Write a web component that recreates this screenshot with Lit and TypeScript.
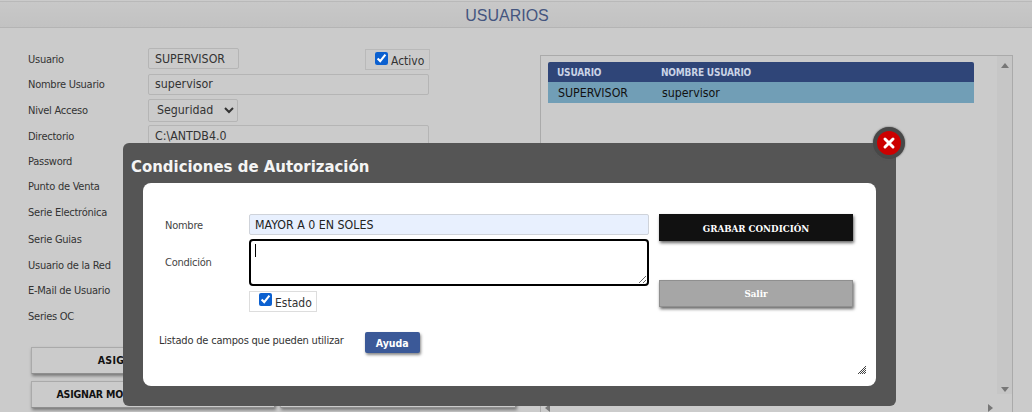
import { LitElement, html, css } from "lit";
import { customElement } from "lit/decorators.js";

const labels = ["Usuario","Nombre Usuario","Nivel Acceso","Directorio","Password","Punto de Venta","Serie Electrónica","Serie Guias","Usuario de la Red","E-Mail de Usuario","Series OC"];

@customElement("app-root")
export class AppRoot extends LitElement {
  static styles = css`
    :host { display: block; position: relative; width: 1032px; height: 412px; overflow: hidden; background: #cbcbcb; font-family: "DejaVu Sans Condensed", "DejaVu Sans", sans-serif; font-size: 11px; letter-spacing: -0.25px; color: #333; }
    * { box-sizing: border-box; }
    .title { margin-top: 1px; height: 27px; background: linear-gradient(#c8c8c8, #c2c2c2); border-top: 1px solid #b9b9b9; border-bottom: 1px solid #b4b4b4; text-align: center; font: 16px/27px "Liberation Sans", sans-serif; letter-spacing: 0; color: #44557f; padding-right: 18px; }
    .main { display: flex; padding-left: 28px; }
    .left { width: 512px; flex: none; padding-top: 18px; }
    .form { display: grid; grid-template-columns: 120px 1fr; grid-template-rows: 25px 26px 26px 25px 25px 25px 27px 27px 25px 26px 26px; align-items: center; }
    .lab { padding-top: 1px; }
    .field { display: flex; align-items: center; justify-content: space-between; width: 282px; }
    input[type=text], .sel { height: 21px; border: 1px solid #b5b5b5; background: #cbcbcb; border-radius: 2px; font-family: inherit; font-size: 12.3px; letter-spacing: 0; color: #333; padding: 0 6px; outline: none; }
    input.full { width: 281px; }
    input.short { width: 91px; }
    .sel { width: 90px; height: 23px; padding: 0 4px; }
    .chk { display: inline-flex; align-items: flex-start; border: 1px solid #b9b9b9; height: 21px; width: 65px; padding: 2px 0 0 9px; gap: 3px; margin-top: 2px; font-size: 12px; letter-spacing: 0; }
    .chk input { margin: 0; width: 13px; height: 13px; accent-color: #0b60d0; }
    .chk span { line-height: 15px; margin-top: 2px; }
    .btns { display: grid; grid-template-columns: 244px 236px; gap: 7px 5px; margin: 18px 0 0 3px; }
    .btn { height: 27px; padding-bottom: 2px; border: 1px solid #8e8e8e; border-top-color: #aaa; border-left-color: #aaa; background: #cbcbcb; box-shadow: 1px 2px 3px #777; font-weight: bold; color: #111; font-size: 10.5px; letter-spacing: 0; display: flex; align-items: center; justify-content: center; }
    .wide { letter-spacing: 0.25px; }
    .tight { letter-spacing: -0.2px; }
    .right { margin-top: 27px; width: 473px; height: 357px; flex: none; border-top: 1px solid #aaa; border-left: 1px solid #aaa; border-right: 1px solid #aaa; display: flex; flex-direction: column; }
    .list { flex: 1; display: flex; min-height: 0; }
    .content { flex: 1; padding: 6px 0 0 7px; }
    .table { width: 426px; }
    .thead, .trow { display: grid; grid-template-columns: 104px 1fr; align-items: center; padding-left: 9px; }
    .thead { height: 20px; background: #2f4578; color: #c9d3e6; font-weight: bold; font-size: 10px; letter-spacing: -0.2px; border-radius: 2px 2px 0 0; }
    .trow { height: 21px; background: #719eb6; color: #111; padding-left: 10px; font-size: 12.3px; letter-spacing: 0; }
    .vbar { width: 15px; background: #c6c6c6; display: flex; flex-direction: column; align-items: center; justify-content: space-between; padding: 7px 0 2px; }
    .hbar { height: 18px; display: flex; align-items: flex-end; justify-content: space-between; padding: 0 19px 0 4px; flex: none; }
    .up { border: 4.5px solid transparent; border-top: 0; border-bottom: 5px solid #777; }
    .down { border: 4.5px solid transparent; border-bottom: 0; border-top: 5px solid #777; }
    .lf { border: 4.5px solid transparent; border-left: 0; border-right: 5px solid #777; }
    .rt { border: 4.5px solid transparent; border-right: 0; border-left: 5px solid #777; }

    .modal { position: absolute; left: 123px; top: 143px; width: 773px; height: 263px; background: #555; border-radius: 6px; padding: 0 20px; display: flex; flex-direction: column; }
    .mhead { height: 40px; margin-left: -12px; font-size: 16.6px; letter-spacing: 0; font-weight: bold; color: #f4f4f4; line-height: 47px; }
    .mbody { position: relative; width: 733px; height: 203px; background: #fff; border-radius: 8px; padding: 31px 23px 0 22px; display: grid; grid-template-columns: 84px 400px 194px; grid-template-rows: 25px 52px 28px; }
    .mlab { color: #444; }
    .l1 { padding-top: 5px; } .l2 { padding-top: 17px; }
    input.nm { width: 400px; height: 21px; padding: 0 5px; background: #e8f0fe; border-color: #cfd3da; color: #222; }
    .ta { position: relative; height: 47px; width: 400px; }
    textarea { display: block; width: 400px; height: 47px; border: 2px solid #000; border-radius: 4px; background: #fff; outline: none; padding: 0; margin: 0; resize: both; }
    .caret { position: absolute; left: 6px; top: 5px; width: 1px; height: 13px; background: #000; }
    .side { grid-column: 3; grid-row: 1 / span 3; padding-left: 10px; display: flex; flex-direction: column; gap: 39px; }
    .mb { height: 27px; width: 194px; display: flex; align-items: center; justify-content: center; color: #fff; font-weight: bold; font-size: 9.7px; letter-spacing: 0; box-shadow: 1px 2px 3px #666; font-family: "DejaVu Serif Condensed", "DejaVu Sans", sans-serif; }
    .grab { background: #111; padding-top: 2px; }
    .salir { background: #a6a6a6; border: 1px solid #8f8f8f; }
    .est { grid-column: 2; grid-row: 3; align-self: start; margin-top: 0; width: 68px; border-color: #ddd; padding-top: 1px; }
    .est span { margin-top: 3px; }
    .foot { position: absolute; left: 16px; top: 149px; display: flex; align-items: flex-start; gap: 21px; color: #333; letter-spacing: -0.2px; }
    .foot span { line-height: 16px; margin-top: 1px; }
    .ayuda { width: 55px; height: 21px; border-radius: 2px; background: #3b5998; color: #fff; font-weight: bold; font-size: 10.5px; letter-spacing: 0; display: flex; align-items: center; justify-content: center; box-shadow: 1px 2px 3px #888; }
    .grip { position: absolute; right: 10px; bottom: 12px; width: 8px; height: 8px; }
    .close { position: absolute; left: 873px; top: 127px; width: 32px; height: 32px; border-radius: 50%; background: #c00; border: 4px solid #484848; box-shadow: 0 0 2px #555; display: flex; align-items: center; justify-content: center; }
  `;

  render() {
    return html`
      <div class="title">USUARIOS</div>
      <div class="main">
        <div class="left">
          <div class="form">
            ${labels.map((l, i) => html`<div class="lab">${l}</div><div>${this.field(i)}</div>`)}
          </div>
          <div class="btns">
            <div class="btn wide">ASIGNAR PERMISOS</div><div class="btn"></div>
            <div class="btn tight">ASIGNAR MONTOS DE AUTORIZACIÓN</div><div class="btn"></div>
          </div>
        </div>
        <div class="right">
          <div class="list">
            <div class="content">
              <div class="table">
                <div class="thead"><div>USUARIO</div><div>NOMBRE USUARIO</div></div>
                <div class="trow"><div>SUPERVISOR</div><div>supervisor</div></div>
              </div>
            </div>
            <div class="vbar"><div class="up"></div><div class="down"></div></div>
          </div>
          <div class="hbar"><div class="lf"></div><div class="rt"></div></div>
        </div>
      </div>
      <div class="modal">
        <div class="mhead">Condiciones de Autorización</div>
        <div class="mbody">
          <div class="mlab l1">Nombre</div>
          <div><input class="nm" type="text" .value=${"MAYOR A 0 EN SOLES"} /></div>
          <div class="side">
            <div class="mb grab">GRABAR CONDICIÓN</div>
            <div class="mb salir">Salir</div>
          </div>
          <div class="mlab l2">Condición</div>
          <div class="ta"><textarea></textarea><div class="caret"></div></div>
          <label class="chk est"><input type="checkbox" checked /><span>Estado</span></label>
          <div class="foot"><span>Listado de campos que pueden utilizar</span><div class="ayuda">Ayuda</div></div>
          <svg class="grip" viewBox="0 0 8 8"><path d="M8 0L0 8M8 2L2 8M8 4L4 8M8 6L6 8" stroke="#444" stroke-width="1"/></svg>
        </div>
      </div>
      <div class="close">
        <svg width="14" height="14" viewBox="0 0 14 14"><path d="M3 3L11 11M11 3L3 11" stroke="#fff" stroke-width="3" stroke-linecap="round"/></svg>
      </div>
    `;
  }

  field(i: number) {
    if (i === 0) return html`<div class="field"><input class="short" type="text" .value=${"SUPERVISOR"} /><label class="chk"><input type="checkbox" checked /><span>Activo</span></label></div>`;
    if (i === 1) return html`<input class="full" type="text" .value=${"supervisor"} />`;
    if (i === 2) return html`<select class="sel"><option>Seguridad</option></select>`;
    if (i === 3) return html`<input class="full" type="text" .value=${"C:\\ANTDB4.0"} />`;
    return html`<input class="full" type="text" />`;
  }
}
